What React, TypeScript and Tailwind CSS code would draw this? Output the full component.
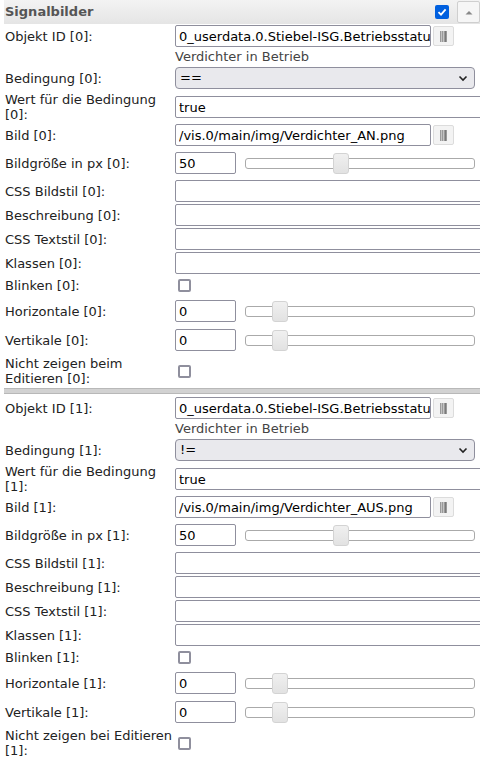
import type { ReactNode } from 'react';

const FONT = { fontFamily: '"DejaVu Sans", Verdana, sans-serif' };

function Row({ label, h, children }: { label: ReactNode; h: string; children?: ReactNode }) {
  return (
    <div className={`flex items-center ${h}`}>
      <div className="w-[175px] shrink-0 pl-[5px] leading-[15px] text-[#222]">{label}</div>
      <div className="flex min-w-0 flex-1 items-center">{children}</div>
    </div>
  );
}

function TextBox({ value = '', w = 'w-[310px]' }: { value?: string; w?: string }) {
  return (
    <input
      readOnly
      value={value}
      className={`h-[22px] ${w} shrink-0 rounded-[2px] border border-[#8f8f9d] bg-white pl-[3px] text-black outline-none`}
    />
  );
}

function PickButton() {
  return (
    <button
      type="button"
      className="ml-[2px] flex h-[20px] w-[21px] shrink-0 items-center justify-center rounded-[2px] border border-[#dcdcdc] bg-[#f3f3f3]"
    >
      <svg width="7" height="11" viewBox="0 0 7 11">
        <rect x="0" y="0" width="7" height="11" fill="#9a9a9a" />
        <rect x="1" y="0" width="1" height="11" fill="#c4c4c4" />
        <rect x="3" y="0" width="1" height="11" fill="#c4c4c4" />
        <rect x="5" y="0" width="1" height="11" fill="#7a7a7a" />
      </svg>
    </button>
  );
}

function Check({ checked = false }: { checked?: boolean }) {
  if (checked)
    return (
      <span className="flex h-[14px] w-[14px] items-center justify-center rounded-[2px] bg-[#0060df]">
        <svg width="10" height="10" viewBox="0 0 10 10">
          <path d="M1.5 5.2 L4 7.6 L8.6 2.4" fill="none" stroke="white" strokeWidth="1.8" />
        </svg>
      </span>
    );
  return <span className="block h-[13px] w-[13px] rounded-[2px] border-2 border-[#8f8f9d] bg-white" />;
}

function Slider({ pos }: { pos: number }) {
  return (
    <div className="relative ml-[9px] h-[11px] w-[230px] shrink-0 rounded-[3px] border border-[#aaa] bg-white">
      <span
        className="absolute top-[-6px] h-[21px] w-[16px] rounded-[3px] border border-[#d3d3d3] bg-gradient-to-b from-[#f0f0f0] to-[#e2e2e2]"
        style={{ left: pos }}
      />
    </div>
  );
}

function Select({ value }: { value: string }) {
  return (
    <div className="flex h-[22px] w-[300px] items-center justify-between rounded-[4px] border border-[#8f8f9d] bg-[#e9e9ed] pl-[4px] pr-[6px] text-black">
      <span>{value}</span>
      <svg width="10" height="7" viewBox="0 0 10 7">
        <path d="M1.5 1.5 L5 5 L8.5 1.5" fill="none" stroke="#222" strokeWidth="1.6" />
      </svg>
    </div>
  );
}

function Block({ i, op, img, last }: { i: number; op: string; img: string; last: ReactNode }) {
  return (
    <div>
      <Row label={`Objekt ID [${i}]:`} h="h-[24px]">
        <TextBox value="0_userdata.0.Stiebel-ISG.Betriebsstatus.Verdichter" w="w-[256px]" />
        <PickButton />
      </Row>
      <div className="flex h-[17px] items-center pl-[175px] text-[#444]">Verdichter in Betrieb</div>
      <Row label={`Bedingung [${i}]:`} h="h-[26px]">
        <Select value={op} />
      </Row>
      <Row label={`Wert für die Bedingung [${i}]:`} h="h-[32px]">
        <TextBox value="true" />
      </Row>
      <Row label={`Bild [${i}]:`} h="h-[24px]">
        <TextBox value={img} w="w-[256px]" />
        <PickButton />
      </Row>
      <Row label={`Bildgröße in px [${i}]:`} h="h-[32px]">
        <TextBox value="50" w="w-[61px]" />
        <Slider pos={87} />
      </Row>
      <Row label={`CSS Bildstil [${i}]:`} h="h-[24px]">
        <TextBox />
      </Row>
      <Row label={`Beschreibung [${i}]:`} h="h-[24px]">
        <TextBox />
      </Row>
      <Row label={`CSS Textstil [${i}]:`} h="h-[24px]">
        <TextBox />
      </Row>
      <Row label={`Klassen [${i}]:`} h="h-[24px]">
        <TextBox />
      </Row>
      <Row label={`Blinken [${i}]:`} h="h-[21px]">
        <span className="ml-[3px]">
          <Check />
        </span>
      </Row>
      <Row label={`Horizontale [${i}]:`} h="h-[30px]">
        <TextBox value="0" w="w-[61px]" />
        <Slider pos={26} />
      </Row>
      <Row label={`Vertikale [${i}]:`} h="h-[28px]">
        <TextBox value="0" w="w-[61px]" />
        <Slider pos={26} />
      </Row>
      <Row label={last} h="h-[34px]">
        <span className="ml-[3px]">
          <Check />
        </span>
      </Row>
    </div>
  );
}

export default function App() {
  return (
    <div className="h-[757px] w-[480px] overflow-hidden bg-white text-[13px]" style={FONT}>
      <div className="ml-[4px] flex h-[24px] items-center justify-between bg-gradient-to-b from-[#f3f3f3] to-[#e5e5e5] pl-[1px]">
        <span className="font-bold text-[#555]">Signalbilder</span>
        <div className="flex items-center gap-[8px]">
          <Check checked />
          <button
            type="button"
            className="flex h-[22px] w-[23px] items-center justify-center rounded-[2px] border border-[#cfcfcf] bg-[#f6f6f6]"
          >
            <svg width="8" height="5" viewBox="0 0 8 5">
              <path d="M0.5 4.5 L4 1 L7.5 4.5 Z" fill="#888" />
            </svg>
          </button>
        </div>
      </div>
      <Block
        i={0}
        op="=="
        img="/vis.0/main/img/Verdichter_AN.png"
        last={
          <>
            Nicht zeigen beim
            <br />
            Editieren [0]:
          </>
        }
      />
      <div className="mb-[2px] ml-[4px] h-[6px] border-y border-[#b8b8b8] bg-[#d2d2d2]" />
      <Block
        i={1}
        op="!="
        img="/vis.0/main/img/Verdichter_AUS.png"
        last={
          <>
            <span className="whitespace-nowrap">Nicht zeigen bei Editieren</span>
            <br />
            [1]:
          </>
        }
      />
    </div>
  );
}
